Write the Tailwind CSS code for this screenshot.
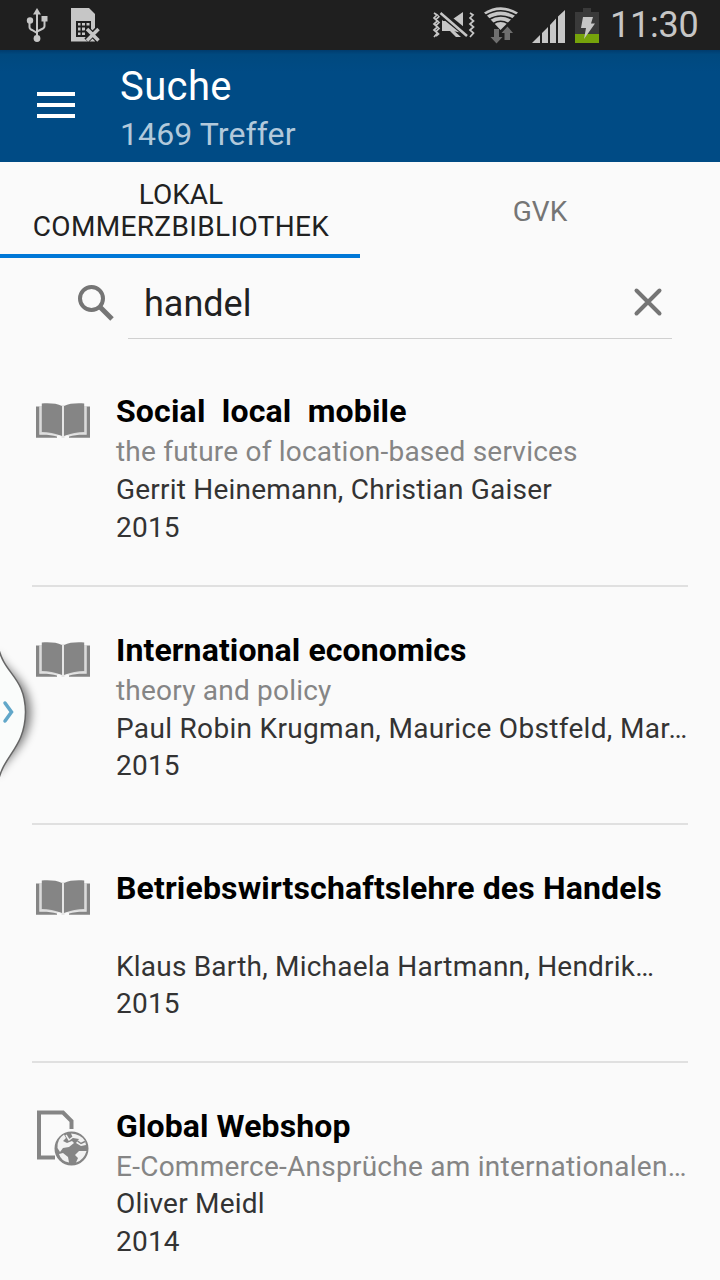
<!DOCTYPE html>
<html lang="de">
<head>
<meta charset="utf-8">
<title>Suche</title>
<script src="https://cdn.jsdelivr.net/npm/@tailwindcss/browser@4"></script>
</head>
<body class="bg-[#fafafa]">
<svg width="0" height="0" class="absolute">
  <defs>
    <symbol id="book" viewBox="0 0 56 38">
      <path d="M4 4H52V33H4Z" fill="#dadada"/><path d="M26.500 3H29.500V36H26.500Z" fill="#e6e6e6"/>
      <path d="M5 31.500Q18 31 26.500 34.500H29.500Q38 31 51 31.500V34H5Z" fill="#e6e6e6"/>
      <g fill="#858585">
        <path d="M1 4.500H4.200V32.800C11 32.500 17 33 22 34.500V35.800H1Z"/>
        <path d="M55 4.500H51.800V32.800C45 32.500 39 33 34 34.500V35.800H55Z"/>
        <path d="M6.800 1.500C15 1 22 1.500 27 4V34C20 31 13 30.300 6.800 30Z"/>
        <path d="M49.200 1.500C41 1 34 1.500 29 4V34C36 31 43 30.300 49.200 30Z"/>
      </g>
    </symbol>
  </defs>
</svg>
<div class="relative w-[720px] h-[1280px] overflow-hidden bg-[#fafafa] font-[Roboto,sans-serif]">
  <header class="flex h-[50px] bg-[#1f1f1f]">
    <svg width="600" height="50" viewBox="0 0 600 50" fill="#c6c6c6">
      <g stroke="#c6c6c6" fill="none" stroke-width="2"><path d="M37 12V38M29.500 21V27Q29.500 29 32 30L37 33M44.500 18V26Q44.500 28 42 29L37 31.500"/></g>
      <path d="M37 8L41 14.500H33Z"/><circle cx="30" cy="20.500" r="3.200"/><path d="M41.500 16H47.500V21.500H41.500Z"/><circle cx="37" cy="38.500" r="3.400"/>
      <path d="M71 8H89L95 14V41.500H71Z"/>
      <path d="M76 21H91V37H76Z" fill="#1f1f1f"/>
      <path d="M78 23h2.500v2.500h-2.500zM82 23h3v2.500h-3zM86.500 23h3v2.500h-3zM78 27.500h2.500v3h-2.500zM82 27.500h3v3h-3zM78 32.500h2.500v2.500h-2.500zM82 32.500h3v2.500h-3z"/>
      <path d="M86.500 28.500L98.500 40.500M98.500 28.500L86.500 40.500" stroke="#1f1f1f" stroke-width="6"/>
      <path d="M87 29L98.500 40.500M98.500 29L87 40.500" stroke="#c6c6c6" stroke-width="3.500"/>
      <g fill="none" stroke="#c6c6c6" stroke-width="1.700"><path d="M434 13l3 2-3 3 3.500 3-3.500 3 3.500 3-3.500 3 3.500 3-3.500 4M438 14.500l1 2-3 3 3 3-3 3 3 3-3 3 2.500 2.500-2.500 2M470 13l3 2-3 3 3.500 3-3.500 3 3.500 3-3.500 3 3.500 3-3.500 4"/></g>
      <path d="M442 21H450L463 12V33L450 30.500H442Z"/>
      <path d="M440 12L467 34" stroke="#1f1f1f" stroke-width="7"/><path d="M440.500 13L467 36" stroke="#c6c6c6" stroke-width="2.500"/><path d="M442 20L461 37H456L450 31H442Z"/>
      <path d="M484 12.500Q500.500 2 518 12.500L500.500 30Z"/>
      <g fill="none" stroke="#1f1f1f" stroke-width="1.700"><path d="M485.500 15.500Q500.500 6 516.500 15.500M489 19.500Q500.500 12.500 513 19.500M493.500 23.500Q500.500 19 508 23.500"/></g>
      <path d="M494 29h5v8h3.500l-6 6.500-6-6.500h3.500zM504.500 40h5.500v-7h3l-5.500-6.500-6 6.500h3z" fill="#6f6f6f"/>
      <path d="M532 43L540 35V43ZM542 33L548 27V43H542ZM550 25L556 18.500V43H550ZM558 16.500L565 10V43H558Z"/>
      <path d="M575 12H583V8H591V12H599V34H575Z" fill="#3a3a3a"/><path d="M575 34H599V43H575Z" fill="#76a30b"/>
      <path d="M583 17H593L591 23.500H595L584 39L586 28H581Z"/>
    </svg>
    <div class="ml-[10px] text-[36px] leading-[50px] tracking-[-0.2px] text-[#c6c6c6] whitespace-nowrap">11:30</div>
  </header>
  <div class="flex h-[112px] bg-gradient-to-b from-[#003c6e] from-0% via-[#00497f] via-[4%] to-[#004b85] to-20% pl-[37px]">
    <div class="mt-[42px] flex w-[38px] flex-col gap-[7px]"><i class="h-1 bg-white"></i><i class="h-1 bg-white"></i><i class="h-1 bg-white"></i></div>
    <div class="ml-[45px] whitespace-nowrap pt-[13px]">
      <div class="text-[40px] leading-[48px] tracking-[0.4px] text-white">Suche</div>
      <div class="text-[32px] leading-[46px] tracking-[0.1px] text-[#b2c9db]">1469 Treffer</div>
    </div>
  </div>
  <nav class="grid h-[96px] grid-cols-2 text-center text-[28px] leading-[32px]">
    <div class="border-b-4 border-[#0078d7] pt-[17px] pl-[2px] text-[#212121]">LOKAL<br><span class="tracking-[0.35px]">COMMERZBIBLIOTHEK</span></div>
    <div class="pt-[34px] text-[#757575]">GVK</div>
  </nav>
  <div class="flex h-[90px] pl-[76px]">
    <svg class="mt-[26px]" width="40" height="40" fill="none" stroke="#757575"><circle cx="15.500" cy="14.500" r="11.500" stroke-width="4"/><path d="M24 23L36 35" stroke-width="5"/></svg>
    <div class="ml-[12px] flex h-[81px] w-[544px] justify-between border-b border-[#d0d0d0] pl-4 pr-[8px]">
      <div class="pt-[22px] text-[36px] leading-[48px] text-[#212121]">handel</div>
      <svg class="mt-[28px]" width="32" height="32" stroke="#757575" stroke-width="4" stroke-linecap="round"><path d="M4.500 4.500L27.500 27.500M27.500 4.500L4.500 27.500"/></svg>
    </div>
  </div>
  <main class="px-8 text-[28px] leading-[38px] tracking-[0.21px] text-[#333] whitespace-nowrap">
    <article class="flex h-[239px] border-b-2 border-[#e0e0e0] pt-[43px]">
      <svg class="ml-[3px] mt-[11px] mr-[25px] shrink-0" width="56" height="38"><use href="#book"/></svg>
      <div><h2 class="h-[42px] text-[32px] leading-[40px] tracking-[0.17px] font-bold text-black whitespace-pre">Social  local  mobile</h2><p class="text-[#858585]">the future of location-based services</p><p>Gerrit Heinemann, Christian Gaiser</p><p>2015</p></div>
    </article>
    <article class="flex h-[238px] border-b-2 border-[#e0e0e0] pt-[43px]">
      <svg class="ml-[3px] mt-[11px] mr-[25px] shrink-0" width="56" height="38"><use href="#book"/></svg>
      <div><h2 class="h-[42px] text-[32px] leading-[40px] tracking-[0.1px] font-bold text-black">International economics</h2><p class="text-[#858585]">theory and policy</p><p class="h-[37px] tracking-[0.32px]">Paul Robin Krugman, Maurice Obstfeld, Mar…</p><p>2015</p></div>
    </article>
    <article class="flex h-[238px] border-b-2 border-[#e0e0e0] pt-[43px]">
      <svg class="ml-[3px] mt-[11px] mr-[25px] shrink-0" width="56" height="38"><use href="#book"/></svg>
      <div><h2 class="h-[42px] text-[32px] leading-[40px] tracking-[0.15px] font-bold text-black">Betriebswirtschaftslehre des Handels</h2><p class="h-[38px]"></p><p class="h-[37px]">Klaus Barth, Michaela Hartmann, Hendrik…</p><p>2015</p></div>
    </article>
    <article class="flex h-[217px] pt-[43px]">
      <svg class="ml-[3px] mt-[2px] mr-[25px] shrink-0" width="56" height="60" viewBox="0 0 56 60"><path d="M20 49.500H4V4.500H28L36.500 13V21" fill="none" stroke="#858585" stroke-width="4"/><circle cx="36.500" cy="40.500" r="16" fill="#858585" stroke="#858585" stroke-width="2"/><path d="M22.500 40Q22 31 29 26.500L31 30L28 33L32 35L37 33L39 35L34 39L28 40L25 44ZM24 46L28 45L33 49L34 54.500Q26 53 24 46ZM36 25.500Q46 26 50 33L51 37L46 38L41 35L44 31L38 30ZM40 47L44 43L51.500 43Q49 52 41 54.500L43 50Z" fill="#f2f2f2"/><path d="M31 27L34 32L38 29" fill="none" stroke="#f2f2f2" stroke-width="1.500"/><path d="M42.500 33L46 35.500L50 33.500" fill="none" stroke="#858585" stroke-width="1.500"/></svg>
      <div><h2 class="h-[42px] text-[32px] leading-[40px] tracking-[0.1px] font-bold text-black">Global Webshop</h2><p class="h-[37px] tracking-[0.25px] text-[#858585]">E-Commerce-Ansprüche am internationalen…</p><p>Oliver Meidl</p><p>2014</p></div>
    </article>
  </main>
  <svg class="absolute left-0 top-[630px]" width="70" height="160" viewBox="0 0 70 160">
    <defs><filter id="soft" x="-50%" y="-20%" width="220%" height="140%"><feGaussianBlur stdDeviation="5"/></filter></defs>
    <path d="M-4 22C5 42 30 48 31 82C30 115 8 126 -4 146Z" fill="#000" opacity=".5" filter="url(#soft)"/>
    <path d="M-2 16C4 45 25 46 25.500 82C25 118 4 124 -2 152Z" fill="#fafcfb" stroke="#666" stroke-width="1.500"/>
    <path d="M5 73L11.500 82L5 91" fill="none" stroke="#61a7c9" stroke-width="3.500" stroke-linecap="round"/>
  </svg>
</div>
</body>
</html>
